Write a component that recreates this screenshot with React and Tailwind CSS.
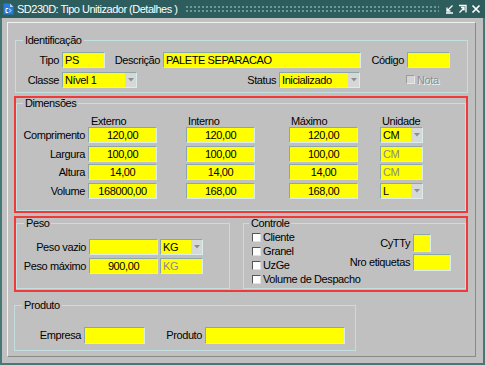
import React from 'react';

const edge = 'border border-t-[#8ba7a7] border-l-[#8ba7a7] border-b-[#dcebeb] border-r-[#dcebeb]';

const Input = ({ className = '', value = '', center, muted }) => (
  <div
    className={`h-[16px] bg-[#ffff00] ${edge} flex items-center overflow-hidden whitespace-nowrap ${
      center ? 'justify-center' : 'pl-[2px]'
    } ${muted ? 'text-[#8c8c8c]' : 'text-black'} ${className}`}
  >
    {value}
  </div>
);

const Select = ({ className = '', value }) => (
  <div className={`h-[16px] flex ${edge} ${className}`}>
    <div className="flex-1 bg-[#ffff00] pl-[2px] flex items-center whitespace-nowrap overflow-hidden">{value}</div>
    <div className="w-[11px] bg-[#d6d8d8] flex items-center justify-center">
      <svg width="6" height="4" viewBox="0 0 6 4">
        <path d="M0 0h6L3 3.5z" fill="#8a9090" />
      </svg>
    </div>
  </div>
);

const Check = ({ label, disabled }) => (
  <div className="flex items-center h-[14px] whitespace-nowrap">
    <div
      className={`shrink-0 w-[9px] h-[9px] border ${
        disabled
          ? 'border-t-[#9a9a9a] border-l-[#9a9a9a] border-b-[#e8e8e8] border-r-[#e8e8e8] bg-[#d4d4d4]'
          : 'bg-white border-t-[#555] border-l-[#555] border-b-[#e0e0e0] border-r-[#e0e0e0]'
      }`}
    />
    <span
      className={`ml-[2px] whitespace-nowrap ${
        disabled ? 'text-[#8e8e8e] [text-shadow:1px_1px_0_#f4f4f4]' : 'text-black'
      }`}
    >
      {label}
    </span>
  </div>
);

const Group = ({ title, className = '', legendClass = 'ml-[7px] h-[13px] leading-[13px]', children }) => (
  <fieldset className={`border border-[#c4dfdf] ${className}`}>
    <legend className={`px-[2px] ${legendClass}`}>{title}</legend>
    {children}
  </fieldset>
);

const Label = ({ className = '', children }) => (
  <div className={`shrink-0 text-right pr-[3px] whitespace-nowrap ${className}`}>{children}</div>
);

const dims = [
  { label: 'Comprimento', ext: '120,00', int: '120,00', max: '120,00', un: 'CM', sel: true },
  { label: 'Largura', ext: '100,00', int: '100,00', max: '100,00', un: 'CM' },
  { label: 'Altura', ext: '14,00', int: '14,00', max: '14,00', un: 'CM' },
  { label: 'Volume', ext: '168000,00', int: '168,00', max: '168,00', un: 'L', sel: true },
];

export default function App() {
  return (
    <div className="w-[485px] h-[365px] bg-[#467878] flex flex-col font-['Liberation_Sans',Arial,sans-serif] text-[11px] tracking-[-0.4px] text-black overflow-hidden">
      {/* Title bar */}
      <div className="h-[18px] bg-[#2e5d5d] flex items-center pl-[3px] pr-[4px] text-white">
        <svg width="11" height="12" viewBox="0 0 11 12" className="shrink-0">
          <path d="M0.5 0.5h6.5l3.5 3.5v7.5h-10z" fill="#2b7bd6" />
          <path d="M7 0.5v3.5h3.5z" fill="#a9d0f5" />
          <path d="M5 5.5h-2v4h2" fill="none" stroke="#fff" strokeWidth="1" />
          <path d="M6 5.5l2 2-2 2" fill="none" stroke="#fff" strokeWidth="1" />
        </svg>
        <span className="ml-[3px] text-[11px] tracking-[-0.5px] whitespace-nowrap">SD230D: Tipo Unitizador (Detalhes )</span>
        <div className="flex-1 h-[8px] ml-[8px] mr-[6px] bg-[radial-gradient(circle,#6a9a9a_0.8px,transparent_1px)] bg-[length:4px_4px]" />
        <div className="flex items-center gap-[4px]">
          <svg width="9" height="10" viewBox="0 0 9 10">
            <path d="M7.5 1.5L2 7M2 3.5V7h3.5M1 9h7" fill="none" stroke="#fff" strokeWidth="1.3" />
          </svg>
          <svg width="9" height="10" viewBox="0 0 9 10">
            <path d="M1 1.5h7v7M1.5 8.5l4.5-4.5M3 3.5h3v3" fill="none" stroke="#fff" strokeWidth="1.3" />
          </svg>
          <svg width="10" height="10" viewBox="0 0 10 10">
            <path d="M1.5 1.5l7 7M8.5 1.5l-7 7" fill="none" stroke="#fff" strokeWidth="1.7" />
          </svg>
        </div>
      </div>

      {/* Body */}
      <div className="flex-1 mx-[2px] mb-[2px] bg-[#c0c0c0] pt-[4px] pl-[5px] pr-[7px] pb-[6px] flex">
        <div className="flex-1 border border-t-[#f0f0f0] border-l-[#f0f0f0] border-b-[#8a8a8a] border-r-[#8a8a8a] pl-[6px] pr-[7px] flex flex-col">
          {/* Identificação */}
          <Group title="Identificação" className="mt-[11px] ml-[1px] w-[453px] pb-[4px]">
            <div className="flex items-center mt-[5px]">
              <Label className="w-[46px]">Tipo</Label>
              <Input className="w-[43px]" value="PS" />
              <Label className="w-[58px]">Descrição</Label>
              <Input className="w-[198px]" value="PALETE SEPARACAO" />
              <Label className="w-[46px]">Código</Label>
              <Input className="w-[43px]" />
            </div>
            <div className="flex items-center mt-[3px]">
              <Label className="w-[46px]">Classe</Label>
              <Select className="w-[75px]" value="Nível 1" />
              <Label className="w-[142px]">Status</Label>
              <Select className="w-[81px]" value="Inicializado" />
              <div className="ml-[46px]">
                <Check label="Nota" disabled />
              </div>
            </div>
          </Group>

          {/* Dimensões */}
          <div className="mt-[3px] border-2 border-[#f03a3a]">
            <Group title="Dimensões" legendClass="ml-[6px] h-[10px] leading-[10px]" className="pb-[11px]">
              <div className="flex items-center h-[12px] mt-[7px]">
                <div className="w-[71px]" />
                <div className="w-[69px] pl-[3px]">Externo</div>
                <div className="w-[69px] ml-[29px] pl-[2px]">Interno</div>
                <div className="w-[69px] ml-[34px] pl-[2px]">Máximo</div>
                <div className="w-[43px] ml-[22px] pl-[2px]">Unidade</div>
              </div>
              <div className="flex flex-col gap-[2px]">
                {dims.map((d) => (
                  <div key={d.label} className="flex items-center">
                    <Label className="w-[71px]">{d.label}</Label>
                    <Input className="w-[69px]" value={d.ext} center />
                    <Input className="w-[69px] ml-[29px]" value={d.int} center />
                    <Input className="w-[69px] ml-[34px]" value={d.max} center />
                    {d.sel ? (
                      <Select className="w-[43px] ml-[22px]" value={d.un} />
                    ) : (
                      <Input className="w-[43px] ml-[22px]" value={d.un} muted />
                    )}
                  </div>
                ))}
              </div>
            </Group>
          </div>

          {/* Peso + Controle */}
          <div className="mt-[3px] border-2 border-[#f03a3a] flex">
            <Group title="Peso" legendClass="ml-[7px] h-[11px] leading-[11px]" className="w-[214px] pb-[14px] mb-[1px]">
              <div className="flex items-center mt-[10px]">
                <Label className="w-[72px]">Peso vazio</Label>
                <Input className="w-[69px]" />
                <Select className="w-[43px] ml-[2px]" value="KG" />
              </div>
              <div className="flex items-center mt-[2px]">
                <Label className="w-[72px]">Peso máximo</Label>
                <Input className="w-[69px]" value="900,00" center />
                <Input className="w-[43px] ml-[2px]" value="KG" muted />
              </div>
            </Group>
            <Group title="Controle" legendClass="ml-[5px] h-[11px] leading-[11px]" className="flex-1 ml-[13px] mb-[1px]">
              <div className="flex">
                <div className="w-[100px] shrink-0 pl-[8px] mt-[1px]">
                  <Check label="Cliente" />
                  <Check label="Granel" />
                  <Check label="UzGe" />
                  <Check label="Volume de Despacho" />
                </div>
                <div className="flex flex-col">
                  <div className="flex items-center mt-[5px]">
                    <Label className="w-[69px]">CyTTy</Label>
                    <Input className="w-[18px] !h-[18px]" />
                  </div>
                  <div className="flex items-center mt-[2px]">
                    <Label className="w-[69px]">Nro etiquetas</Label>
                    <Input className="w-[38px] !h-[17px]" />
                  </div>
                </div>
              </div>
            </Group>
          </div>

          {/* Produto */}
          <Group title="Produto" className="mt-[7px] w-[342px] pb-[6px]">
            <div className="flex items-center mt-[15px]">
              <Label className="w-[69px]">Empresa</Label>
              <Input className="w-[61px] !h-[17px]" />
              <Label className="w-[60px]">Produto</Label>
              <Input className="w-[140px] !h-[17px]" />
            </div>
          </Group>
        </div>
      </div>
    </div>
  );
}
